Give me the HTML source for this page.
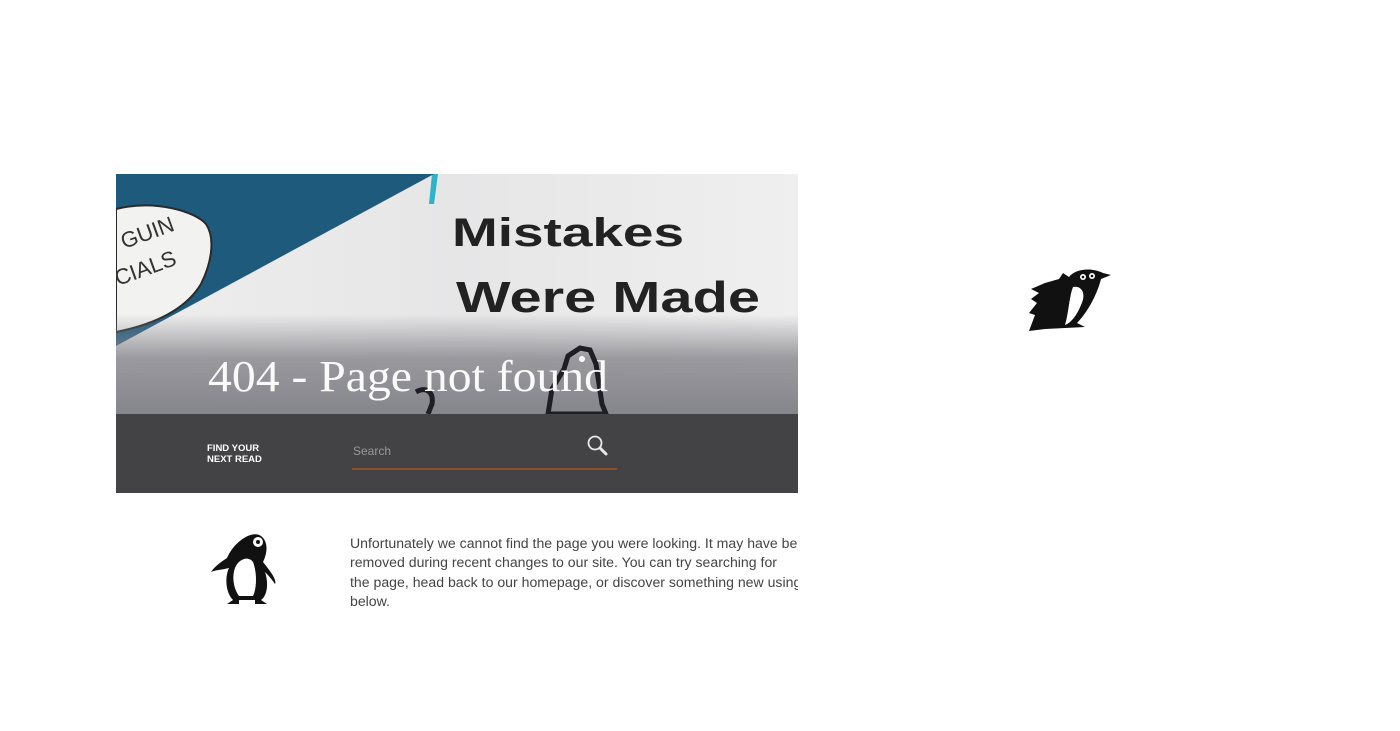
<!DOCTYPE html>
<html><head><meta charset="utf-8"><style>
body{margin:0;width:1400px;height:731px;background:#fff;position:relative;overflow:hidden;font-family:"Liberation Sans",sans-serif}
.hero{position:absolute;left:116px;top:174px;width:682px;height:240px;overflow:hidden;background:#e9e9ea}
.bar{position:absolute;left:116px;top:414px;width:682px;height:79px;background:#434345}
.txt{position:absolute;left:350px;top:534px;width:448px;overflow:hidden;white-space:nowrap;font-size:14.1px;line-height:19.3px;color:#444}
</style></head><body>
<div class="hero">
<svg width="682" height="240" style="position:absolute;left:0;top:0">
<defs><linearGradient id="g" x1="0" y1="0" x2="0" y2="1">
<stop offset="0" stop-color="#8a8a90" stop-opacity="0"/><stop offset="0.45" stop-color="#8a8a90" stop-opacity="0.85"/><stop offset="1" stop-color="#85858c" stop-opacity="1"/></linearGradient>
<linearGradient id="p" x1="0" y1="0" x2="1" y2="0"><stop offset="0" stop-color="#eeeeee"/><stop offset="0.5" stop-color="#e6e6e7"/><stop offset="1" stop-color="#efefef"/></linearGradient></defs>
<rect width="682" height="240" fill="url(#p)"/>
<polygon points="316,0 322,0 318,30 313,30" fill="#2fb3c8"/>
<polygon points="0,0 318,0 0,172" fill="#1d5a7c"/>
<path d="M0,35 C40,25 80,38 90,50 C100,65 95,90 85,110 C70,135 40,150 0,158 Z" fill="#f2f2f0" stroke="#2a2a2a" stroke-width="2"/>
<text x="8" y="75" font-family="Liberation Sans" font-size="22" fill="#333" transform="rotate(-20 8 75)">GUIN</text>
<text x="2" y="112" font-family="Liberation Sans" font-size="22" fill="#333" transform="rotate(-20 2 112)">CIALS</text>
<text x="336" y="72" font-family="Liberation Sans" font-weight="bold" font-size="40" fill="#222" textLength="232" lengthAdjust="spacingAndGlyphs">Mistakes</text>
<text x="340" y="138" font-family="Liberation Sans" font-weight="bold" font-size="44" fill="#222" textLength="304" lengthAdjust="spacingAndGlyphs">Were Made</text>
<rect y="140" width="682" height="100" fill="url(#g)"/>
<path d="M452,182 L464,174 L474,176 L480,190 L486,230 L490,240 L432,240 L436,215 L448,195 Z" fill="none" stroke="#1e1e24" stroke-width="5"/>
<circle cx="466" cy="185" r="3" fill="#fff"/>
<path d="M300,218 C310,212 318,218 316,230 L312,240" fill="none" stroke="#1e1e24" stroke-width="5"/>
<text x="92" y="217" font-family="Liberation Serif" font-size="44" fill="#fafafa" textLength="400" lengthAdjust="spacingAndGlyphs">404 - Page not found</text>
</svg>
</div>
<div class="bar">
<div style="position:absolute;left:91px;top:29px;font-size:9.5px;font-weight:bold;line-height:11px;color:#fff">FIND YOUR<br>NEXT READ</div>
<div style="position:absolute;left:237px;top:30px;font-size:12px;color:#999">Search</div>
<div style="position:absolute;left:236px;top:54px;width:265px;height:2px;background:#8b4e28"></div>
<svg width="26" height="26" style="position:absolute;left:470px;top:20px"><circle cx="9" cy="9" r="6.5" fill="none" stroke="#e8e8e8" stroke-width="1.8"/><path d="M14,14 L20,20" stroke="#e8e8e8" stroke-width="3" stroke-linecap="round"/></svg>
</div>
<svg width="80" height="80" style="position:absolute;left:205px;top:528px" viewBox="0 0 80 80">
<path d="M22,30 C30,12 48,2 56,8 C64,14 62,26 58,34 C66,44 72,52 70,56 C66,50 62,46 60,44 C64,56 62,68 56,72 L62,76 L50,76 L50,72 L34,72 L34,76 L22,76 L28,72 C20,64 20,48 24,40 C16,42 10,42 6,44 C10,38 16,34 22,30 Z" fill="#111"/>
<path d="M30,40 C34,30 44,28 48,34 C52,44 52,60 48,68 L34,68 C28,60 27,48 30,40 Z" fill="#fff"/>
<circle cx="53" cy="14" r="5" fill="#fff"/><circle cx="53" cy="14" r="2" fill="#111"/>
</svg>
<svg width="90" height="70" style="position:absolute;left:1025px;top:265px" viewBox="0 0 90 70">
<path d="M20,18 L34,14 L38,8 L44,12 C50,4 66,2 78,8 L86,10 L76,14 C72,30 62,48 52,58 L60,62 L20,64 L4,66 L10,50 L4,48 L12,38 L6,34 L14,28 L6,24 Z" fill="#111"/>
<path d="M48,22 C56,20 62,28 56,40 C52,50 46,58 40,60 C44,46 44,32 48,22 Z" fill="#fff"/>
<circle cx="58" cy="12" r="3" fill="#fff"/><circle cx="67" cy="11" r="3" fill="#fff"/>
<circle cx="58" cy="12" r="1.3" fill="#111"/><circle cx="67" cy="11" r="1.3" fill="#111"/>
</svg>
<div class="txt">Unfortunately we cannot find the page you were looking. It may have been<br>removed during recent changes to our site. You can try searching for<br>the page, head back to our homepage, or discover something new using<br>below.</div>
</body></html>
